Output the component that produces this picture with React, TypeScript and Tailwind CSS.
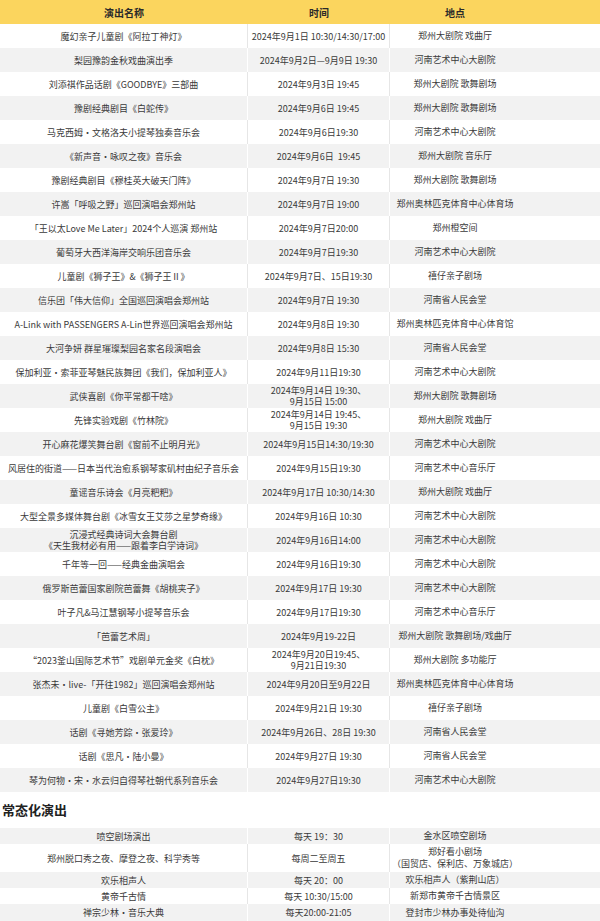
import React from "react";

type Row = [string, string, string];

// 演出列表
const shows: Row[] = [
  ["魔幻亲子儿童剧《阿拉丁神灯》", "2024年9月1日 10:30/14:30/17:00", "郑州大剧院 戏曲厅"],
  ["梨园豫韵金秋戏曲演出季", "2024年9月2日—9月9日 19:30", "河南艺术中心大剧院"],
  ["刘添祺作品话剧《GOODBYE》三部曲", "2024年9月3日 19:45", "郑州大剧院 歌舞剧场"],
  ["豫剧经典剧目《白蛇传》", "2024年9月6日 19:45", "郑州大剧院 歌舞剧场"],
  ["马克西姆·文格洛夫小提琴独奏音乐会", "2024年9月6日19:30", "河南艺术中心大剧院"],
  ["《新声音·咏叹之夜》音乐会", "2024年9月6日  19:45", "郑州大剧院 音乐厅"],
  ["豫剧经典剧目《穆桂英大破天门阵》", "2024年9月7日 19:30", "郑州大剧院 歌舞剧场"],
  ["许嵩「呼吸之野」巡回演唱会郑州站", "2024年9月7日 19:00", "郑州奥林匹克体育中心体育场"],
  ["「王以太Love Me Later」2024个人巡演 郑州站", "2024年9月7日20:00", "郑州橙空间"],
  ["葡萄牙大西洋海岸交响乐团音乐会", "2024年9月7日19:30", "河南艺术中心大剧院"],
  ["儿童剧《狮子王》&《狮子王Ⅱ》", "2024年9月7日、15日19:30", "禧仔亲子剧场"],
  ["信乐团「伟大信仰」全国巡回演唱会郑州站", "2024年9月7日 19:30", "河南省人民会堂"],
  ["A-Link with PASSENGERS A-Lin世界巡回演唱会郑州站", "2024年9月8日 19:30", "郑州奥林匹克体育中心体育馆"],
  ["大河争妍 群星璀璨梨园名家名段演唱会", "2024年9月8日 15:30", "河南省人民会堂"],
  ["保加利亚·索菲亚琴魅民族舞团《我们，保加利亚人》", "2024年9月11日19:30", "河南艺术中心大剧院"],
  ["武侠喜剧《你平常都干啥》", "2024年9月14日 19:30、\n9月15日 15:00", "郑州大剧院 歌舞剧场"],
  ["先锋实验戏剧《竹林院》", "2024年9月14日 19:45、\n9月15日 19:30", "郑州大剧院 戏曲厅"],
  ["开心麻花爆笑舞台剧《窗前不止明月光》", "2024年9月15日14:30/19:30", "河南艺术中心大剧院"],
  ["风居住的街道——日本当代治愈系钢琴家矶村由纪子音乐会", "2024年9月15日19:30", "河南艺术中心音乐厅"],
  ["童谣音乐诗会《月亮粑粑》", "2024年9月17日 10:30/14:30", "郑州大剧院 戏曲厅"],
  ["大型全景多媒体舞台剧《冰雪女王艾莎之星梦奇缘》", "2024年9月16日 10:30", "河南艺术中心大剧院"],
  ["沉浸式经典诗词大会舞台剧\n《天生我材必有用——跟着李白学诗词》", "2024年9月16日14:00", "河南艺术中心大剧院"],
  ["千年等一回——经典金曲演唱会", "2024年9月16日19:30", "河南艺术中心大剧院"],
  ["俄罗斯芭蕾国家剧院芭蕾舞《胡桃夹子》", "2024年9月17日 19:30", "河南艺术中心大剧院"],
  ["叶子凡&马江慧钢琴小提琴音乐会", "2024年9月17日19:30", "河南艺术中心音乐厅"],
  ["「芭蕾艺术周」", "2024年9月19-22日", "郑州大剧院 歌舞剧场/戏曲厅"],
  ["“2023釜山国际艺术节”戏剧单元金奖《白枕》", "2024年9月20日19:45、\n9月21日19:30", "郑州大剧院 多功能厅"],
  ["张杰未·live-「开往1982」巡回演唱会郑州站", "2024年9月20日至9月22日", "郑州奥林匹克体育中心体育场"],
  ["儿童剧《白雪公主》", "2024年9月21日 19:30", "禧仔亲子剧场"],
  ["话剧《寻她芳踪·张爱玲》", "2024年9月26日、28日 19:30", "河南省人民会堂"],
  ["话剧《思凡·陆小曼》", "2024年9月27日 19:30", "河南省人民会堂"],
  ["琴为何物·宋·水云归自得琴社朝代系列音乐会", "2024年9月27日19:30", "河南艺术中心大剧院"],
];

// 常态化演出
const regular: { row: Row; h: string }[] = [
  { row: ["喷空剧场演出", "每天 19：30", "金水区喷空剧场"], h: "h-[16px]" },
  { row: ["郑州脱口秀之夜、摩登之夜、科学秀等", "每周二至周五", "郑好看小剧场\n（国贸店、保利店、万象城店）"], h: "h-[28px]" },
  { row: ["欢乐相声人", "每天 20：00", "欢乐相声人（紫荆山店）"], h: "h-[16px]" },
  { row: ["黄帝千古情", "每天 10:30/15:00", "新郑市黄帝千古情景区"], h: "h-[16px]" },
  { row: ["禅宗少林·音乐大典", "每天20:00-21:05", "登封市少林办事处待仙沟"], h: "h-[17px]" },
];

function TableRow({ row, gray, h }: { row: Row; gray: boolean; h: string }) {
  const line = gray ? "border-white" : "border-[#e6e6e6]";
  return (
    <div className={`grid grid-cols-[248px_142px_1fr] ${h} ${gray ? "bg-[#f2f2f2]" : "bg-white"}`}>
      <div className={`flex items-center justify-center text-center whitespace-pre leading-[11px] border-r ${line}`}>
        {row[0]}
      </div>
      <div className={`flex items-center justify-center text-center whitespace-pre leading-[11px] border-r ${line}`}>
        {row[1]}
      </div>
      <div className="flex items-center justify-center text-center whitespace-pre leading-[12px] pr-[80px]">
        {row[2]}
      </div>
    </div>
  );
}

export default function App() {
  return (
    <div
      className="w-[600px] h-[921px] overflow-hidden bg-white text-[9px] text-[#3a3a3a]"
      style={{ fontFamily: '"Noto Sans CJK SC", "Noto Sans", sans-serif' }}
    >
      {/* 表头 */}
      <div className="grid grid-cols-[248px_142px_1fr] h-[24px] bg-[#fbd55e] font-bold text-[10px] text-[#2a2a2a]">
        <div className="flex items-center justify-center">演出名称</div>
        <div className="flex items-center justify-center">时间</div>
        <div className="flex items-center justify-center pr-[80px]">地点</div>
      </div>

      {shows.map((row, i) => (
        <TableRow key={i} row={row} gray={i % 2 === 1} h="h-[24px]" />
      ))}

      <div className="h-[36px] flex items-center pl-[2px] text-[13px] font-bold text-[#222]">常态化演出</div>

      {regular.map((r, i) => (
        <TableRow key={i} row={r.row} gray={i % 2 === 0} h={r.h} />
      ))}
    </div>
  );
}
